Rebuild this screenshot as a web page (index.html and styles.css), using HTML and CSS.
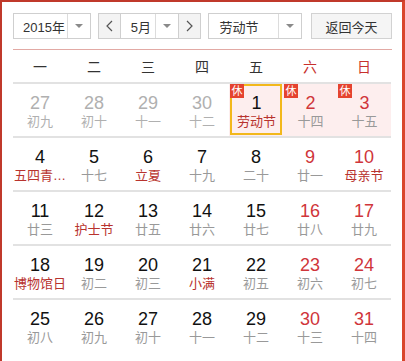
FILE: index.html
```html
<!DOCTYPE html>
<html lang="zh-CN">
<head>
  <meta charset="UTF-8">
  <meta name="viewport" content="width=device-width, initial-scale=1.0">
  <title>万年历</title>
  <link rel="stylesheet" href="styles.css">
</head>
<body>
  <div class="calendar">
    <div class="toolbar">
      <div class="select year">
        <span class="val">2015年</span>
        <span class="drop"><i class="arrow"></i></span>
      </div>
      <div class="month-group">
        <span class="nav"><svg width="7" height="12" viewBox="0 0 7 12"><polyline points="6,1 1,6 6,11" fill="none" stroke="#555" stroke-width="1.2"/></svg></span>
        <div class="select month">
          <span class="val">5月</span>
          <span class="drop"><i class="arrow"></i></span>
        </div>
        <span class="nav"><svg width="7" height="12" viewBox="0 0 7 12"><polyline points="1,1 6,6 1,11" fill="none" stroke="#555" stroke-width="1.2"/></svg></span>
      </div>
      <div class="select holiday">
        <span class="val">劳动节</span>
        <span class="drop"><i class="arrow"></i></span>
      </div>
      <button class="today-btn">返回今天</button>
    </div>

    <div class="week">
      <span>一</span><span>二</span><span>三</span><span>四</span><span>五</span>
      <span class="red">六</span><span class="red">日</span>
    </div>

    <div class="days">
      <div class="cell other"><b>27</b><small>初九</small></div>
      <div class="cell other"><b>28</b><small>初十</small></div>
      <div class="cell other"><b>29</b><small>十一</small></div>
      <div class="cell other"><b>30</b><small>十二</small></div>
      <div class="cell rest current"><em class="badge">休</em><b>1</b><small class="fest">劳动节</small></div>
      <div class="cell rest wkend"><em class="badge">休</em><b>2</b><small>十四</small></div>
      <div class="cell rest wkend"><em class="badge">休</em><b>3</b><small>十五</small></div>

      <div class="cell"><b>4</b><small class="fest">五四青…</small></div>
      <div class="cell"><b>5</b><small>十七</small></div>
      <div class="cell"><b>6</b><small class="fest">立夏</small></div>
      <div class="cell"><b>7</b><small>十九</small></div>
      <div class="cell"><b>8</b><small>二十</small></div>
      <div class="cell wkend"><b>9</b><small>廿一</small></div>
      <div class="cell wkend"><b>10</b><small class="fest">母亲节</small></div>

      <div class="cell"><b>11</b><small>廿三</small></div>
      <div class="cell"><b>12</b><small class="fest">护士节</small></div>
      <div class="cell"><b>13</b><small>廿五</small></div>
      <div class="cell"><b>14</b><small>廿六</small></div>
      <div class="cell"><b>15</b><small>廿七</small></div>
      <div class="cell wkend"><b>16</b><small>廿八</small></div>
      <div class="cell wkend"><b>17</b><small>廿九</small></div>

      <div class="cell"><b>18</b><small class="fest">博物馆日</small></div>
      <div class="cell"><b>19</b><small>初二</small></div>
      <div class="cell"><b>20</b><small>初三</small></div>
      <div class="cell"><b>21</b><small class="fest">小满</small></div>
      <div class="cell"><b>22</b><small>初五</small></div>
      <div class="cell wkend"><b>23</b><small>初六</small></div>
      <div class="cell wkend"><b>24</b><small>初七</small></div>

      <div class="cell"><b>25</b><small>初八</small></div>
      <div class="cell"><b>26</b><small>初九</small></div>
      <div class="cell"><b>27</b><small>初十</small></div>
      <div class="cell"><b>28</b><small>十一</small></div>
      <div class="cell"><b>29</b><small>十二</small></div>
      <div class="cell wkend"><b>30</b><small>十三</small></div>
      <div class="cell wkend"><b>31</b><small>十四</small></div>
    </div>
  </div>
</body>
</html>
```

FILE: styles.css
```css
html, body {
  margin: 0;
  height: 100%;
  background: #ffffff;
}
body {
  font-family: "Liberation Sans", Arial, "Noto Sans CJK SC", sans-serif;
  color: #222;
}
.calendar {
  box-sizing: border-box;
  height: 100%;
  border: 2px solid #c0392b;
  border-right-width: 3px;
  border-right-color: #d9452c;
  border-bottom: none;
  padding: 11px 10px 0 11px;
}

/* barra de cima */
.toolbar {
  display: flex;
  height: 26px;
}
.select {
  box-sizing: border-box;
  display: flex;
  height: 26px;
  border: 1px solid #cfcfcf;
  background: #fff;
  font-size: 13px;
  color: #333;
  white-space: nowrap;
}
.select .val {
  flex: 1;
  display: flex;
  align-items: center;
  padding-left: 10px;
}
.select .drop {
  width: 22px;
  flex: none;
  display: flex;
  align-items: center;
  justify-content: center;
  border-left: 1px solid #dcdcdc;
}
.arrow {
  width: 0;
  height: 0;
  border-left: 4px solid transparent;
  border-right: 4px solid transparent;
  border-top: 4px solid #8a8a8a;
}
.year {
  width: 78px;
}
.year .val {
  padding-left: 9px;
}
.month-group {
  box-sizing: border-box;
  display: flex;
  width: 104px;
  height: 26px;
  margin-left: 7px;
  border: 1px solid #cfcfcf;
}
.month-group .nav {
  width: 21px;
  display: flex;
  align-items: center;
  justify-content: center;
  background: #f3f3f3;
}
.month {
  flex: 1;
  border-top: none;
  border-bottom: none;
  height: 24px;
}
.month .val {
  padding-left: 10px;
}
.holiday {
  width: 94px;
  margin-left: 7px;
}
.today-btn {
  box-sizing: border-box;
  width: 81px;
  height: 26px;
  margin-left: 9px;
  border: 1px solid #d2d2d2;
  background: #f5f5f5;
  font-family: inherit;
  font-size: 13px;
  color: #333;
  padding: 0;
}

/* cabecalho da semana */
.week {
  display: grid;
  grid-template-columns: repeat(7, 54px);
  margin-top: 10px;
  border-top: 1px solid #e2a9a4;
  height: 32px;
  align-items: center;
  font-size: 14px;
  color: #333;
}
.week span {
  text-align: center;
}
.week .red {
  color: #c8302c;
}

/* dias */
.days {
  display: grid;
  grid-template-columns: repeat(7, 54px);
  grid-auto-rows: 54px;
}
.cell {
  position: relative;
  box-sizing: border-box;
  border-top: 2px solid #e2e2e2;
  display: flex;
  flex-direction: column;
  align-items: center;
  padding-top: 9px;
  background-clip: padding-box;
}
.cell b {
  font-weight: normal;
  font-size: 18px;
  line-height: 20px;
  color: #111;
}
.cell small {
  font-size: 13px;
  line-height: 18px;
  color: #999;
  white-space: nowrap;
}
.cell small.fest {
  color: #b8332e;
}
.cell.wkend b {
  color: #d0353a;
}
.cell.other b {
  color: #b0b0b0;
}
.cell.other small {
  color: #b0b0b0;
}
.cell.rest {
  background-color: #fdeeee;
  padding-left: 1px;
}
.cell.current::after {
  content: "";
  position: absolute;
  top: 0;
  left: 1px;
  right: 1px;
  bottom: 1px;
  border: 2px solid #f2b81b;
}
.badge {
  position: absolute;
  top: 0;
  left: 1px;
  width: 14px;
  height: 14px;
  background: #e5432f;
  color: #fff;
  font-style: normal;
  font-size: 11px;
  line-height: 14px;
  text-align: center;
  z-index: 1;
}
```
